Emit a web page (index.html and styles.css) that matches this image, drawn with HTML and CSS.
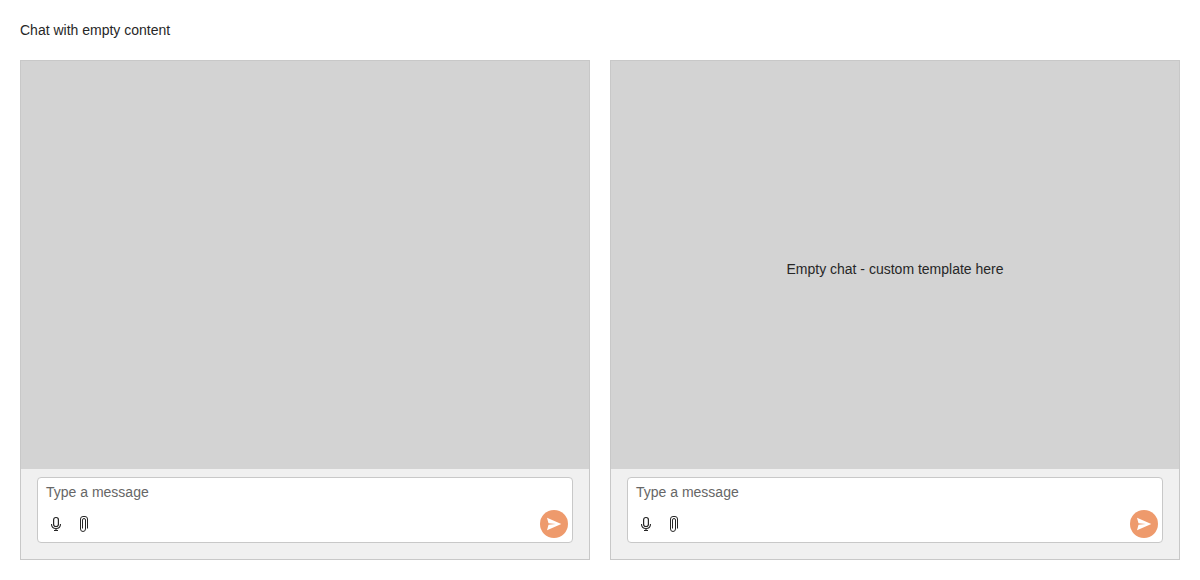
FILE: index.html
```html
<!DOCTYPE html>
<html lang="en">
<head>
<meta charset="utf-8">
<title>Chat with empty content</title>
<link rel="stylesheet" href="styles.css">
</head>
<body>
<svg class="sprite" aria-hidden="true">
  <symbol id="mic" viewBox="0 0 16 16">
    <rect x="5.600" y="1.500" width="4.800" height="9" rx="2.200" stroke-width="1.200"/>
    <path d="M3.500 8c0 3 1.800 4.500 4.500 4.500s4.500-1.500 4.500-4.500M8 12.500v2" stroke-width="1.100"/>
    <path d="M6 14.500h4"/>
  </symbol>
  <symbol id="clip" viewBox="0 0 16 16">
    <path d="M11.500 12.500V3a2.500 2.500 0 0 0-2.500-2.500H7A2.500 2.500 0 0 0 4.500 3v10a2.500 2.500 0 0 0 5 0V4a1.500 1.500 0 0 0-3 0v8.500"/>
  </symbol>
  <symbol id="send" viewBox="0 0 16 16">
    <path d="M1 1.800 15.300 8 1 14.200l1.500-5.400L10 8 2.500 7.200z"/>
  </symbol>
</svg>
<main class="page">
  <p class="title">Chat with empty content</p>
  <div class="chats">
    <section class="chat">
      <div class="messages"></div>
      <form class="footer">
        <div class="prompt">
          <textarea class="input" rows="1" placeholder="Type a message" aria-label="Message"></textarea>
          <div class="actions">
            <button class="tool" type="button" aria-label="Speech to text"><svg><use href="#mic"/></svg></button>
            <button class="tool" type="button" aria-label="Attach file"><svg><use href="#clip"/></svg></button>
            <button class="send" type="button" aria-label="Send message"><svg><use href="#send"/></svg></button>
          </div>
        </div>
      </form>
    </section>
    <section class="chat">
      <div class="messages">Empty chat - custom template here</div>
      <form class="footer">
        <div class="prompt">
          <textarea class="input" rows="1" placeholder="Type a message" aria-label="Message"></textarea>
          <div class="actions">
            <button class="tool" type="button" aria-label="Speech to text"><svg><use href="#mic"/></svg></button>
            <button class="tool" type="button" aria-label="Attach file"><svg><use href="#clip"/></svg></button>
            <button class="send" type="button" aria-label="Send message"><svg><use href="#send"/></svg></button>
          </div>
        </div>
      </form>
    </section>
  </div>
</main>
</body>
</html>
```
FILE: styles.css
```css
* { box-sizing: border-box; }
body {
  margin: 0;
  background: #fff;
  color: #272727;
  font: 14px/20px "Liberation Sans", Arial, sans-serif;
}
.sprite { display: none; }
.page {
  display: flex;
  flex-direction: column;
  gap: 20px;
  min-height: 100vh;
  padding: 20px;
}
.title { margin: 0; }
.chats {
  display: grid;
  grid-template-columns: 1fr 1fr;
  gap: 20px;
  flex: 1;
}
.chat {
  display: flex;
  flex-direction: column;
  border: 1px solid #c8c8c8;
}
.messages {
  display: flex;
  align-items: center;
  justify-content: center;
  flex: 1;
  padding-top: 8px;
  background: #d3d3d3;
}
.footer {
  padding: 8px 16px 16px;
  background: #f0f0f0;
}
.prompt {
  border: 1px solid #c8c8c8;
  border-radius: 4px;
  background: #fff;
}
.input {
  display: block;
  width: 100%;
  height: 28px;
  padding: 4px 8px;
  border: 0;
  outline: 0;
  background: transparent;
  color: inherit;
  font: inherit;
  resize: none;
  overflow: hidden;
}
.input::placeholder { color: #666; opacity: 1; }
.actions {
  display: flex;
  padding: 4px;
}
.tool, .send {
  display: flex;
  align-items: center;
  justify-content: center;
  width: 28px;
  height: 28px;
  padding: 0;
  border: 0;
  background: transparent;
}
.tool svg, .send svg { width: 16px; height: 16px; }
.tool svg { fill: none; stroke: #272727; }
.send {
  margin-left: auto;
  border-radius: 50%;
  background: #ee9a6c;
}
.send svg { fill: #fff; }
```
